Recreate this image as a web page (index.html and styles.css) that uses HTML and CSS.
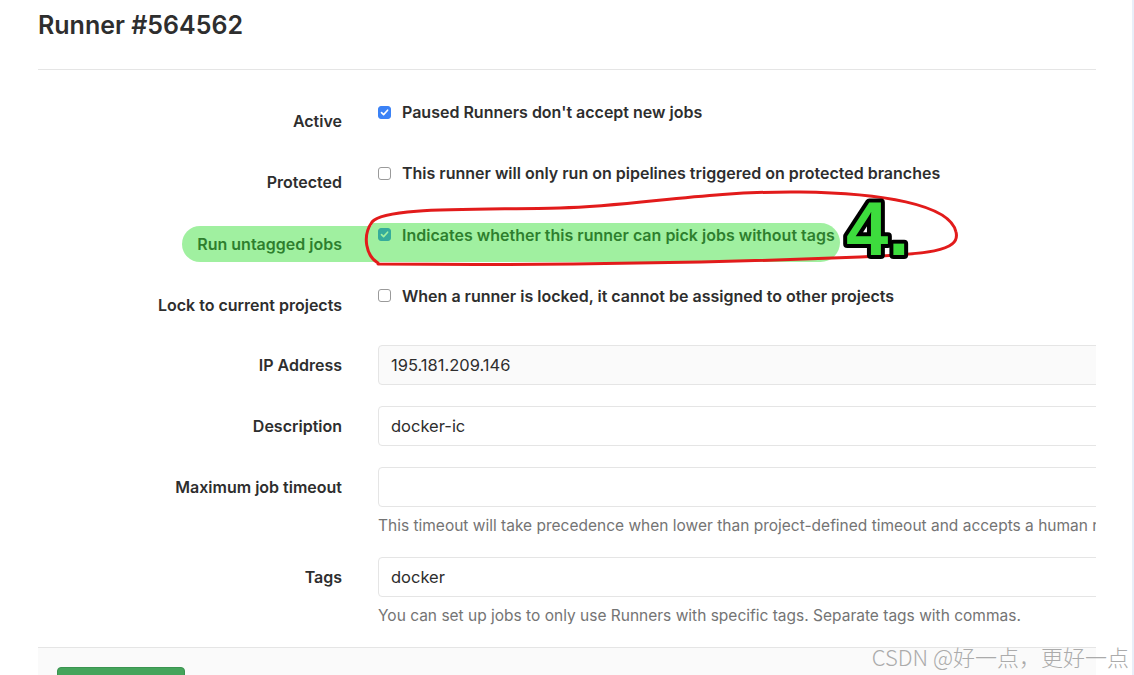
FILE: index.html
```html
<!DOCTYPE html>
<html lang="en">
<head>
    <meta charset="UTF-8">
    <meta name="viewport" content="width=device-width, initial-scale=1.0">
    <title>Runner #564562</title>
    <link rel="stylesheet" href="styles.css">
</head>
<body>
    <div class="page">
        <div class="content">
            <h3 class="page-title">Runner #564562</h3>

            <form class="runner-form">
                <div class="form-group check-row">
                    <label class="col-label">Active</label>
                    <div class="col-field">
                        <label class="check"><span class="box checked"><svg width="9" height="9" viewBox="0 0 9 9"><path d="M1.5 4.6 L3.6 6.6 L7.6 2.2" fill="none" stroke="#fff" stroke-width="1.6" stroke-linecap="round" stroke-linejoin="round"/></svg></span>Paused Runners don't accept new jobs</label>
                    </div>
                </div>

                <div class="form-group check-row">
                    <label class="col-label">Protected</label>
                    <div class="col-field">
                        <label class="check"><span class="box"></span>This runner will only run on pipelines triggered on protected branches</label>
                    </div>
                </div>

                <div class="form-group check-row">
                    <label class="col-label">Run untagged jobs</label>
                    <div class="col-field">
                        <label class="check"><span class="box checked"><svg width="9" height="9" viewBox="0 0 9 9"><path d="M1.5 4.6 L3.6 6.6 L7.6 2.2" fill="none" stroke="#fff" stroke-width="1.6" stroke-linecap="round" stroke-linejoin="round"/></svg></span>Indicates whether this runner can pick jobs without tags</label>
                    </div>
                </div>

                <div class="form-group check-row">
                    <label class="col-label">Lock to current projects</label>
                    <div class="col-field">
                        <label class="check"><span class="box"></span>When a runner is locked, it cannot be assigned to other projects</label>
                    </div>
                </div>

                <div class="form-group input-row">
                    <label class="col-label" for="ip">IP Address</label>
                    <div class="col-field">
                        <input class="form-control" id="ip" type="text" value="195.181.209.146" readonly>
                    </div>
                </div>

                <div class="form-group input-row">
                    <label class="col-label" for="description">Description</label>
                    <div class="col-field">
                        <input class="form-control" id="description" type="text" value="docker-ic">
                    </div>
                </div>

                <div class="form-group input-row">
                    <label class="col-label" for="timeout">Maximum job timeout</label>
                    <div class="col-field">
                        <input class="form-control" id="timeout" type="text" value="">
                        <p class="help">This timeout will take precedence when lower than project-defined timeout and accepts a human readable time input language like "1 hour".</p>
                    </div>
                </div>

                <div class="form-group input-row">
                    <label class="col-label" for="tags">Tags</label>
                    <div class="col-field">
                        <input class="form-control" id="tags" type="text" value="docker">
                        <p class="help">You can set up jobs to only use Runners with specific tags. Separate tags with commas.</p>
                    </div>
                </div>

                <div class="form-actions">
                    <button type="submit" class="btn-save">Save changes</button>
                </div>
            </form>
        </div>

        <!-- hand-drawn annotation on top of the screenshot -->
        <div class="marker marker-label"></div>
        <div class="marker marker-text"></div>
        <svg class="annotation" width="1134" height="675" viewBox="0 0 1134 675">
            <path d="M378 263 C366 256 362 236 372 222 C384 207 470 210 560 208 C640 206 700 191 800 192 C880 193 950 204 956 232 C961 252 925 254 860 257 C760 261 600 266 378 264" fill="none" stroke="#e21b1b" stroke-width="3" stroke-linecap="round"/>
            <text x="846" y="255" class="step-num">4.</text>
        </svg>
        <div class="watermark">CSDN @好一点，更好一点</div>
    </div>
</body>
</html>
```

FILE: styles.css
```css
body {
    margin: 0;
    font-family: Inter, "Noto Sans", sans-serif;
    color: #2e2e2e;
    background: #fff;
}
.page {
    position: relative;
    width: 1132px;
    height: 675px;
    overflow: hidden;
    border-right: 2px solid #e8eff9;
}
.content {
    width: 1058px;
    margin-left: 38px;
    overflow: hidden;
}
.page-title {
    margin: 0;
    padding: 10px 0 29px;
    font-size: 25px;
    line-height: 30px;
    font-weight: 600;
    border-bottom: 1px solid #e5e5e5;
}
.runner-form {
    padding-top: 30px;
}
.form-group {
    display: grid;
    grid-template-columns: 304px 1fr;
    column-gap: 36px;
    margin-bottom: 28.33px;
}
.col-label {
    text-align: right;
    font-weight: 600;
    font-size: 16px;
    line-height: 24px;
    padding-top: 9px;
}
.check {
    display: flex;
    align-items: center;
    gap: 11px;
    font-weight: 600;
    font-size: 16px;
    line-height: 24px;
    white-space: nowrap;
}
.box {
    width: 13px;
    height: 13px;
    box-sizing: border-box;
    border: 1px solid #9a9a9a;
    border-radius: 3px;
    background: #fff;
    display: flex;
    align-items: center;
    justify-content: center;
    flex-shrink: 0;
}
.box.checked {
    background: #3b82f6;
    border-color: #3b82f6;
}
.input-row {
    margin-bottom: 21px;
}
.input-row .col-label {
    padding-top: 8px;
}
.form-control {
    display: block;
    width: 900px;
    height: 40px;
    box-sizing: border-box;
    margin: 0;
    padding: 0 12px;
    border: 1px solid #e5e5e5;
    border-radius: 4px;
    font-family: inherit;
    font-size: 16.5px;
    color: #2e2e2e;
    background: #fff;
    outline: none;
}
.form-control[readonly] {
    background: #fafafa;
}
.help {
    margin: 8px 0 0;
    font-size: 15.5px;
    line-height: 21px;
    color: #747474;
    white-space: nowrap;
}
.form-actions {
    border-top: 1px solid #e5e5e5;
    background: #fafafa;
    padding: 19px;
}
.btn-save {
    width: 128px;
    height: 34px;
    border: 1px solid #3a9450;
    border-radius: 4px;
    background: #45a45b;
    color: #fff;
    font-family: inherit;
    font-size: 15px;
}

/* annotation layer */
.marker {
    position: absolute;
    background: rgba(48, 222, 48, 0.46);
    pointer-events: none;
}
.marker-label {
    left: 182px;
    top: 226px;
    width: 190px;
    height: 36px;
    border-radius: 18px 0 0 18px;
}
.marker-text {
    left: 372px;
    top: 223px;
    width: 468px;
    height: 39px;
    border-radius: 0 20px 20px 0;
}
.annotation {
    position: absolute;
    left: 0;
    top: 0;
    pointer-events: none;
}
.step-num {
    font-family: "Liberation Sans", Arial, sans-serif;
    font-weight: bold;
    font-size: 76px;
    fill: #3ddc3d;
    stroke: #000;
    stroke-width: 8px;
    stroke-linejoin: round;
    paint-order: stroke;
}
.watermark {
    position: absolute;
    right: 3px;
    bottom: 6px;
    font-family: "Noto Sans CJK SC", "Noto Sans", sans-serif;
    font-weight: 300;
    font-size: 22px;
    line-height: 26px;
    color: #ababab;
}
```
